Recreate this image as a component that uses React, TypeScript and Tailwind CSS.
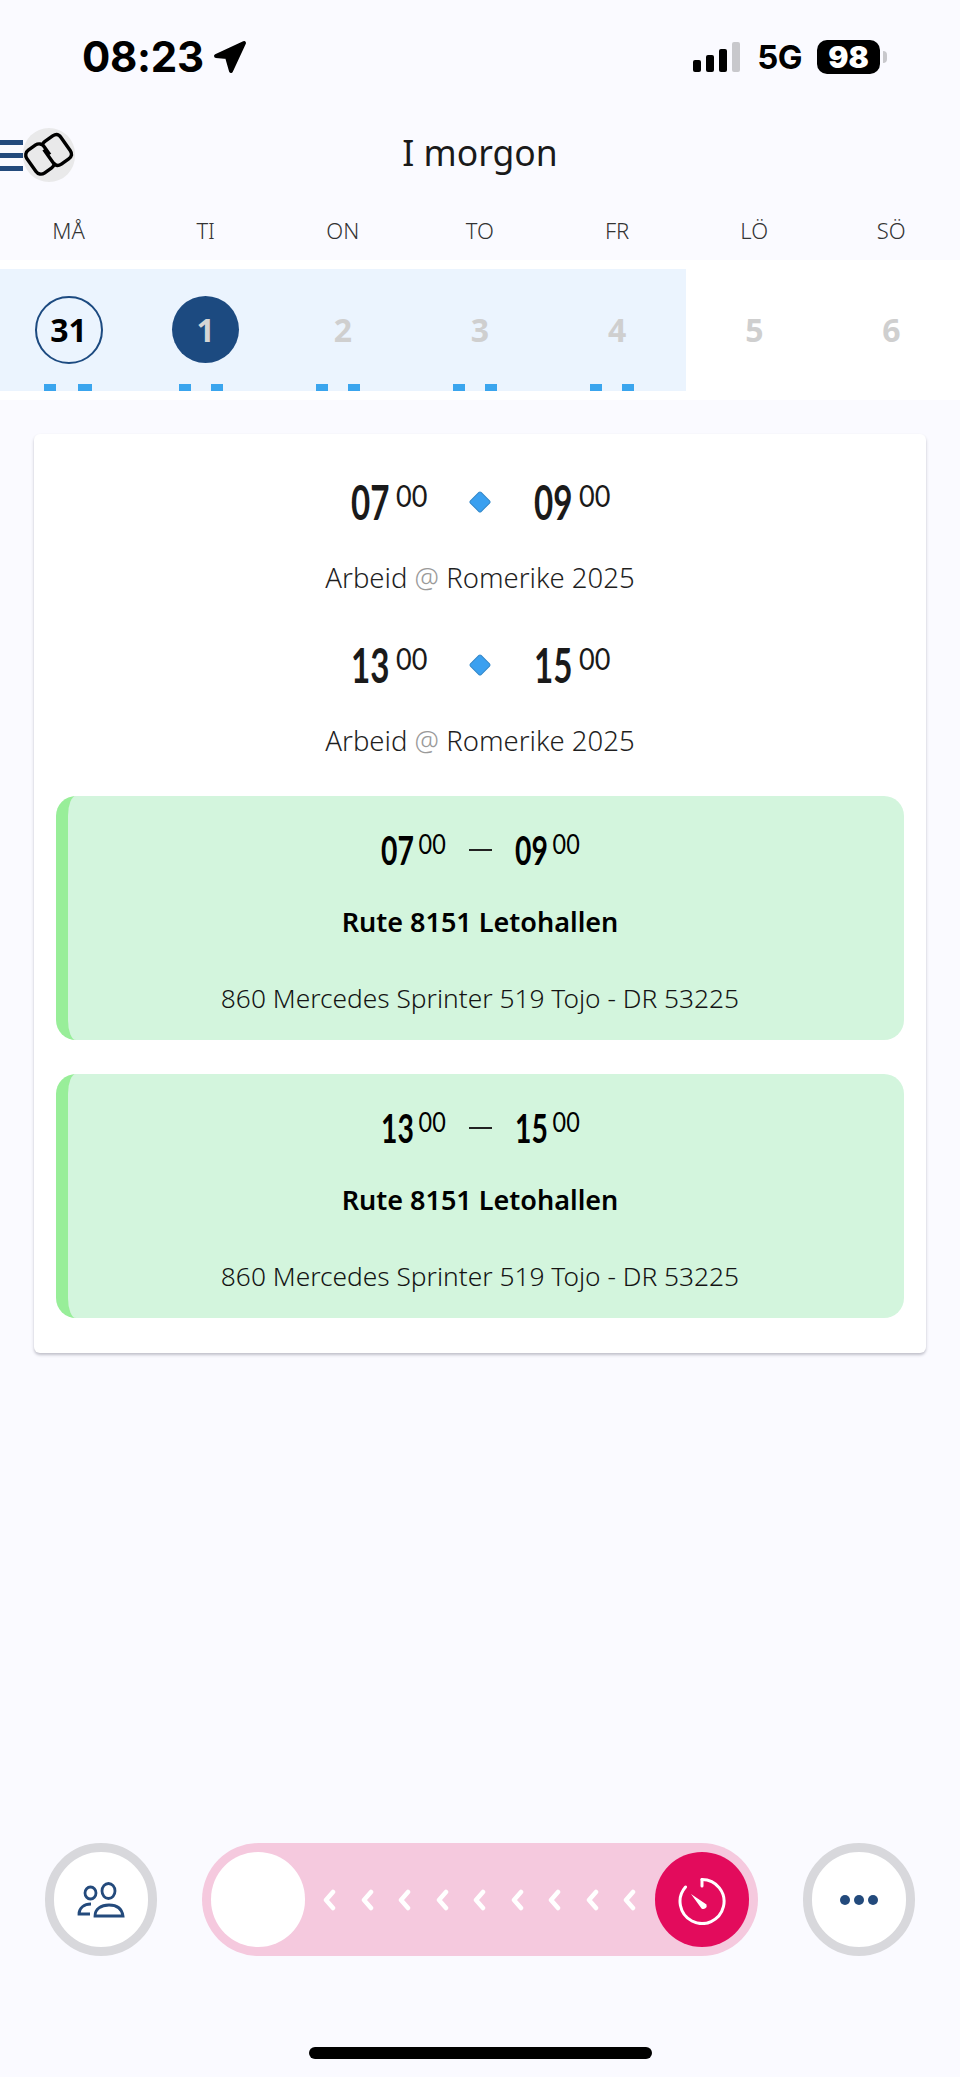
const BODY = { fontFamily: '"Noto Sans", "Open Sans", sans-serif' };

const DAYS = ["MÅ", "TI", "ON", "TO", "FR", "LÖ", "SÖ"];

function Clock({ big, small, size }: { big: string; small: string; size: "lg" | "md" }) {
  const lg = size === "lg";
  return (
    <div className={lg ? "flex w-[75px] items-start justify-between" : "flex w-[65px] items-start justify-between"}>
      <span className={lg ? "inline-block w-[37px] origin-left scale-x-[0.69] font-[Lato] text-[48px] leading-[46px] font-bold whitespace-nowrap text-[#1a1a1a]" : "inline-block w-[31px] origin-left scale-x-[0.69] font-[Lato] text-[41px] leading-[40px] font-bold whitespace-nowrap text-black"}>
        {big}
      </span>
      <span className={lg ? "mt-[3px] mr-[3px] inline-block w-[30px] origin-right scale-x-[0.9] text-right font-[Lato] text-[30px] leading-[26px] text-[#1a1a1a]" : "mt-[2px] mr-[4px] inline-block w-[26px] origin-right scale-x-[0.9] text-right font-[Lato] text-[26px] leading-[24px] text-black"}>
        {small}
      </span>
    </div>
  );
}

function ShiftRow({ from, to }: { from: string; to: string }) {
  return (
    <div className="flex flex-col items-center">
      <div className="flex h-[46px] items-center">
        <Clock big={from} small="00" size="lg" />
        <div className="mx-[46px] h-[16px] w-[16px] rotate-45 rounded-[2px] border border-[#2f86c9] bg-[#3aa0f0]" />
        <Clock big={to} small="00" size="lg" />
      </div>
      <p className="mt-[37px] text-[27.5px] leading-[32px] font-light text-[#1f1f1f]">
        Arbeid <span className="text-[#9a9a9a]">@</span> Romerike 2025
      </p>
    </div>
  );
}

function TripCard({ from, to }: { from: string; to: string }) {
  return (
    <div className="flex h-[244px] flex-col items-center overflow-hidden rounded-[20px] border-l-[12px] border-[#98ee99] bg-[#d3f5dd] pt-[34px] pr-[12px]">
      <div className="flex h-[40px] items-center">
        <Clock big={from} small="00" size="md" />
        <div className="mx-[23px] h-[2px] w-[23px] bg-[#222]" />
        <Clock big={to} small="00" size="md" />
      </div>
      <p className="mt-[36px] text-[27px] leading-[32px] font-semibold text-black">Rute 8151 Letohallen</p>
      <p className="mt-[44px] text-[26.3px] leading-[32px] font-light text-[#141414]">860 Mercedes Sprinter 519 Tojo - DR 53225</p>
    </div>
  );
}

function DayCell({ label, state, dots }: { label: string; state: "outline" | "filled" | "muted"; dots: boolean }) {
  const first = state === "outline";
  return (
    <div className="flex h-[122px] w-[137.14px] flex-col items-center justify-between pt-[27px]">
      <div
        className={
          first
            ? "flex h-[68px] w-[68px] items-center justify-center rounded-full border-2 border-[#1c4a80] text-[32px] font-bold text-black"
            : state === "filled"
              ? "flex h-[67px] w-[67px] items-center justify-center rounded-full bg-[#1c4a80] text-[32px] font-bold text-[#d5d5d5]"
              : "flex h-[68px] w-[68px] items-center justify-center text-[32px] font-bold text-[#cfcfcf]"
        }
      >
        {label}
      </div>
      {dots && (
        <div className={first ? "mr-[2px] flex gap-[22px]" : "mr-[10px] flex gap-[20px]"}>
          <div className="h-[7px] w-[12px] bg-[#3aa5ee]" />
          <div className={first ? "h-[7px] w-[14px] bg-[#3aa5ee]" : "h-[7px] w-[12px] bg-[#3aa5ee]"} />
        </div>
      )}
    </div>
  );
}

export default function App() {
  return (
    <div className="flex h-[2077px] w-[960px] flex-col overflow-hidden bg-[#fafaff]" style={BODY}>
      {/* Status bar */}
      <div className="flex h-[110px] items-center justify-between pt-[4px] pr-[73px] pl-[82px] font-[Inter]">
        <div className="flex items-center gap-[9px]">
          <span className="text-[42px] leading-none font-bold tracking-[-0.3px] text-black">08:23</span>
          <svg width="34" height="34" viewBox="0 0 34 34">
            <path d="M3 16 L31 3 L18 31 L14 17 Z" fill="#000" stroke="#000" strokeWidth="4" strokeLinejoin="round" />
          </svg>
        </div>
        <div className="flex items-center">
          <div className="flex items-end gap-[5px]">
            <div className="h-[12px] w-[8px] rounded-[2px] bg-black" />
            <div className="h-[17px] w-[8px] rounded-[2px] bg-black" />
            <div className="h-[23px] w-[8px] rounded-[2px] bg-black" />
            <div className="h-[30px] w-[8px] rounded-[2px] bg-[#c8c8cc]" />
          </div>
          <span className="ml-[17px] text-[33px] leading-none font-bold tracking-[-0.5px] text-black">5G</span>
          <div className="ml-[15px] flex h-[34px] w-[63px] items-center justify-center rounded-[10px] bg-black text-[30px] leading-none font-black text-white">
            98
          </div>
          <div className="ml-[3px] h-[12px] w-[4px] rounded-r-full bg-[#c8c8cc]" />
        </div>
      </div>

      {/* Header */}
      <div className="grid h-[90px] grid-cols-[1fr_auto_1fr] items-center">
        <div className="flex items-center">
          <div className="flex h-[31px] w-[23px] flex-col justify-between">
            <div className="h-[5px] bg-[#234a7c]" />
            <div className="h-[5px] bg-[#234a7c]" />
            <div className="h-[5px] bg-[#234a7c]" />
          </div>
          <div className="flex h-[54px] w-[52px] items-center justify-center rounded-full bg-[#e9e9ea]">
            <svg width="52" height="54" viewBox="0 0 52 54" fill="none" stroke="#000" strokeWidth="3.4">
              <g transform="rotate(55 17 31)">
                <rect x="3" y="20.5" width="28" height="21" rx="6" />
                <path d="M19 20.5 H29" stroke="#e9e9ea" strokeWidth="5" />
              </g>
              <g transform="rotate(55 34 22)">
                <path d="M24 32.5 H14 Q20 32.5 20 32.5" stroke="none" />
                <path d="M26 32.5 H42 Q48 32.5 48 26.5 V17.5 Q48 11.5 42 11.5 H26 Q20 11.5 20 17.5 V26.5 Q20 30 22 31.5" />
              </g>
            </svg>
          </div>
        </div>
        <h1 className="pb-[5px] text-[35.5px] leading-none font-normal text-[#1a1a1a]">I morgon</h1>
        <div />
      </div>

      {/* Weekday labels */}
      <div className="flex h-[60px] items-center">
        {DAYS.map((d) => (
          <span key={d} className="w-[137.14px] text-center text-[22px] leading-none font-light text-[#333]">
            {d}
          </span>
        ))}
      </div>

      {/* Date strip */}
      <div className="flex h-[140px] items-start bg-white pt-[9px]">
        <div className="flex w-[686px] bg-[#ebf4fe]">
          <DayCell label="31" state="outline" dots />
          <DayCell label="1" state="filled" dots />
          <DayCell label="2" state="muted" dots />
          <DayCell label="3" state="muted" dots />
          <DayCell label="4" state="muted" dots />
        </div>
        <DayCell label="5" state="muted" dots={false} />
        <DayCell label="6" state="muted" dots={false} />
      </div>

      {/* Shift card */}
      <div className="mx-[34px] mt-[34px] flex h-[919px] flex-col rounded-[6px] bg-white px-[22px] pt-[45px] shadow-[0_2px_3px_rgba(60,60,80,0.3)]">
        <ShiftRow from="07" to="09" />
        <div className="mt-[48px]">
          <ShiftRow from="13" to="15" />
        </div>
        <div className="mt-[39px] flex flex-col gap-[34px]">
          <TripCard from="07" to="09" />
          <TripCard from="13" to="15" />
        </div>
      </div>

      {/* Bottom actions */}
      <div className="mt-[490px] flex items-center pl-[45px]">
        <div className="flex h-[113px] w-[112px] items-center justify-center rounded-full border-[9px] border-[#d8d8dc] bg-white">
          <svg width="50" height="42" viewBox="0 0 50 42" fill="none" stroke="#234a7c" strokeWidth="2.8">
            <ellipse cx="14.5" cy="14" rx="5.5" ry="6" />
            <ellipse cx="32.5" cy="12" rx="6.5" ry="7.5" />
            <path d="M15 25 C8 25 3 29 3 35 H14" />
            <path d="M19 37 C19 30 25 26 33 26 C41 26 46 30 47 37 Z" />
          </svg>
        </div>
        <div className="ml-[45px] flex h-[113px] w-[556px] items-center justify-between rounded-full bg-[#f5c9de] px-[9px]">
          <div className="h-[95px] w-[94px] rounded-full bg-white" />
          <div className="flex w-[314px] justify-between">
            {Array.from({ length: 9 }).map((_, i) => (
              <svg key={i} width="14" height="22" viewBox="0 0 14 22" fill="none" stroke="#fff" strokeWidth="4.5" strokeLinecap="round" strokeLinejoin="round">
                <path d="M10 3 L3 11 L10 19" />
              </svg>
            ))}
          </div>
          <div className="flex h-[95px] w-[94px] items-center justify-center rounded-full bg-[#e30b5c]">
            <svg width="50" height="50" viewBox="0 0 50 50" fill="none" stroke="#fff" strokeWidth="3" strokeLinecap="round">
              <path d="M25 4.5 A22 22 0 1 1 8.5 12" />
              <path d="M25 4.5 V11" />
              <path d="M14 19 L29.5 29.5 A3.4 3.4 0 0 1 24.5 33.5 Z" fill="#fff" stroke="none" />
            </svg>
          </div>
        </div>
        <div className="ml-[45px] flex h-[113px] w-[112px] items-center justify-center gap-[4px] rounded-full border-[9px] border-[#d8d8dc] bg-white">
          <div className="h-[10px] w-[10px] rounded-full bg-[#234a7c]" />
          <div className="h-[10px] w-[10px] rounded-full bg-[#234a7c]" />
          <div className="h-[10px] w-[10px] rounded-full bg-[#234a7c]" />
        </div>
      </div>

      {/* Home indicator */}
      <div className="mx-auto mt-[91px] h-[12px] w-[343px] rounded-full bg-black" />
    </div>
  );
}
